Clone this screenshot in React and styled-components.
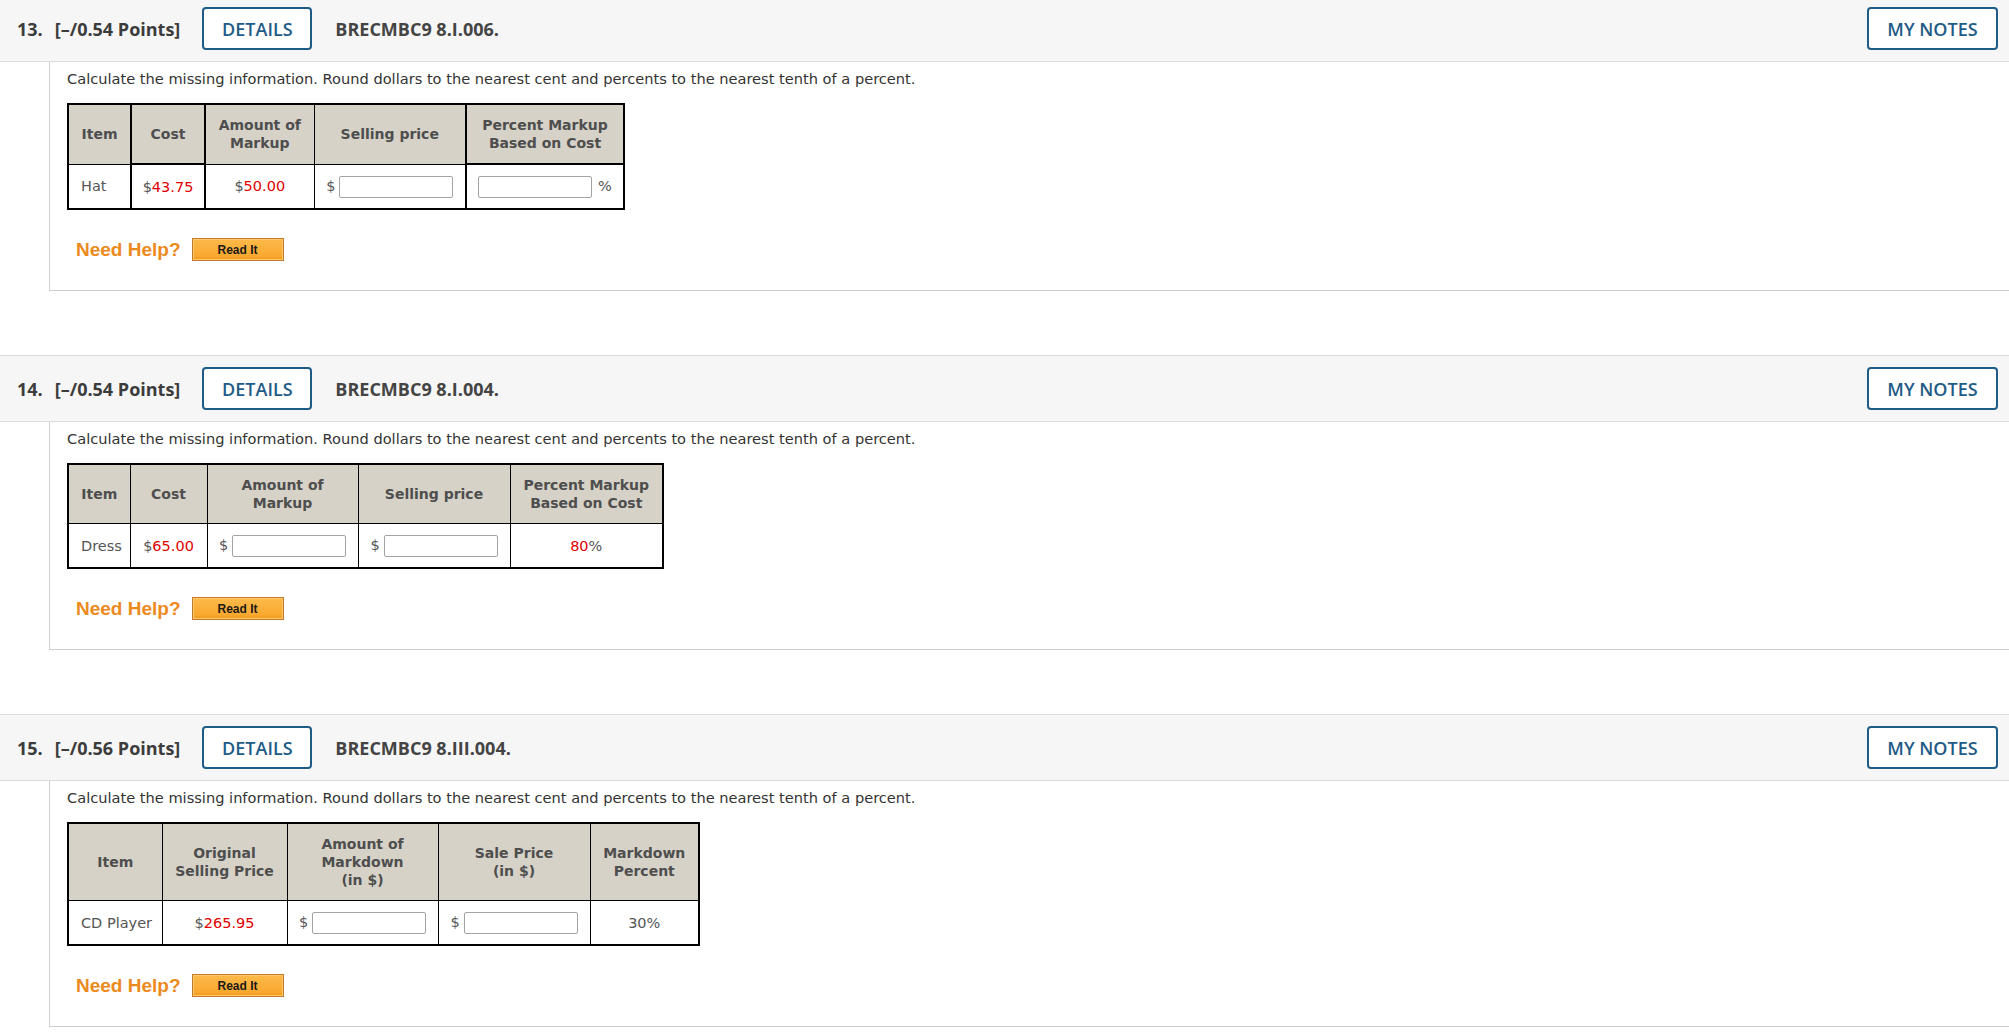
import React from "react";
import styled, { createGlobalStyle } from "styled-components";

const Global = createGlobalStyle`
  html, body { margin: 0; padding: 0; background: #fff; }
  body { font-family: "DejaVu Sans", Verdana, sans-serif; overflow: hidden; }
`;

const Page = styled.div`
  margin-top: -5px;
  display: flex;
  flex-direction: column;
`;

const Question = styled.section`
  display: flex;
  flex-direction: column;
  margin-bottom: 64px;
`;

const Header = styled.header`
  display: flex;
  align-items: center;
  height: 65px;
  background: #f6f6f6;
  border-top: 1px solid #dcdcdc;
  border-bottom: 1px solid #dcdcdc;
  padding: 0 11px 0 17px;
  font-family: "Open Sans", sans-serif;
`;

const Num = styled.span`
  font-size: 18px;
  font-weight: 700;
  color: #3c3c3c;
  margin-right: 12px;
`;

const Points = styled.span`
  font-size: 18px;
  font-weight: 700;
  color: #3c3c3c;
  margin-right: 22px;
`;

const OutlineButton = styled.button`
  box-sizing: border-box;
  height: 43px;
  width: ${(p) => p.$w}px;
  border: 2px solid #1e5c87;
  border-radius: 4px;
  background: #fff;
  color: #1f5b87;
  font-family: "Open Sans", sans-serif;
  font-size: 18px;
  font-weight: 600;
  padding: 0;
  cursor: pointer;
`;

const Code = styled.span`
  margin-left: 23px;
  font-size: 18px;
  font-weight: 700;
  color: #444;
`;

const Spacer = styled.div`
  flex: 1;
`;

const Content = styled.div`
  margin-left: 49px;
  border-left: 1px solid #cfcfcf;
  border-bottom: 1px solid #cfcfcf;
  padding: 8px 0 29px 17px;
  display: flex;
  flex-direction: column;
  align-items: flex-start;
`;

const Prompt = styled.p`
  margin: 0;
  font-size: 14.6px;
  line-height: 18px;
  color: #333;
`;

const Table = styled.table`
  margin-top: 15px;
  border-collapse: collapse;
  border: 2px solid #000;
`;

const Th = styled.th`
  background: #d6d2c8;
  border: ${(p) => (p.$thick ? 2 : 1)}px solid #000;
  padding: 11px 4px;
  font-size: 14px;
  line-height: 18px;
  font-weight: 700;
  color: #4e4e4e;
  text-align: center;
`;

const Td = styled.td`
  border: ${(p) => (p.$thick ? 2 : 1)}px solid #000;
  padding: ${(p) => (p.$left ? "10px 4px 10px 12px" : "10px 4px")};
  font-size: 14.5px;
  line-height: 22px;
  color: #555;
  text-align: ${(p) => (p.$left ? "left" : "center")};
  white-space: nowrap;
  background: #fff;
`;

const Red = styled.span`
  color: #e00000;
`;

const Unit = styled.span`
  color: #555;
`;

const Field = styled.input`
  box-sizing: border-box;
  width: 114px;
  height: 22px;
  border: 1px solid #a3a3a3;
  border-radius: 2px;
  vertical-align: middle;
  margin: ${(p) => (p.$after ? "0 6px 0 0" : "0 0 0 4px")};
  padding: 0;
`;

const HelpRow = styled.div`
  margin-top: 28px;
  margin-left: 9px;
  display: flex;
  align-items: center;
  height: 23px;
`;

const NeedHelp = styled.span`
  font-family: "Liberation Sans", Arial, sans-serif;
  font-weight: 700;
  font-size: 19px;
  color: #ec8a1e;
  margin-right: 11px;
`;

const ReadIt = styled.button`
  box-sizing: border-box;
  width: 92px;
  height: 23px;
  border: 1px solid #c4792a;
  box-shadow: inset 0 0 0 1px #ffc86a, inset 0 -3px 2px rgba(230, 140, 20, 0.35);
  background: linear-gradient(#fcba4a, #f9a52a);
  font-family: "Liberation Sans", Arial, sans-serif;
  font-weight: 700;
  font-size: 12px;
  color: #1a1a1a;
  padding: 0;
`;

const Money = ({ v }) => (
  <>
    <Unit>$</Unit>
    <Red>{v}</Red>
  </>
);

const DollarField = () => (
  <>
    <Unit>$</Unit>
    <Field type="text" />
  </>
);

const QHeader = ({ n, pts, code }) => (
  <Header>
    <Num>{n}.</Num>
    <Points>[–/{pts} Points]</Points>
    <OutlineButton $w={110}>DETAILS</OutlineButton>
    <Code>{code}</Code>
    <Spacer />
    <OutlineButton $w={131}>MY NOTES</OutlineButton>
  </Header>
);

const PROMPT =
  "Calculate the missing information. Round dollars to the nearest cent and percents to the nearest tenth of a percent.";

const Help = () => (
  <HelpRow>
    <NeedHelp>Need Help?</NeedHelp>
    <ReadIt>Read It</ReadIt>
  </HelpRow>
);

const Cols = ({ widths }) => (
  <colgroup>
    {widths.map((w, i) => (
      <col key={i} style={{ width: w }} />
    ))}
  </colgroup>
);

export default function App() {
  return (
    <>
      <Global />
      <Page>
        <Question>
          <QHeader n="13" pts="0.54" code="BRECMBC9 8.I.006." />
          <Content>
            <Prompt>{PROMPT}</Prompt>
            <Table>
              <Cols widths={[63, 74, 109, 152, 158]} />
              <thead>
                <tr>
                  <Th>Item</Th>
                  <Th $thick>Cost</Th>
                  <Th>
                    Amount of
                    <br />
                    Markup
                  </Th>
                  <Th>Selling price</Th>
                  <Th $thick>
                    Percent Markup
                    <br />
                    Based on Cost
                  </Th>
                </tr>
              </thead>
              <tbody>
                <tr>
                  <Td $left>Hat</Td>
                  <Td $thick>
                    <Money v="43.75" />
                  </Td>
                  <Td>
                    <Money v="50.00" />
                  </Td>
                  <Td>
                    <DollarField />
                  </Td>
                  <Td $thick>
                    <Field type="text" $after />
                    <Unit>%</Unit>
                  </Td>
                </tr>
              </tbody>
            </Table>
            <Help />
          </Content>
        </Question>

        <Question>
          <QHeader n="14" pts="0.54" code="BRECMBC9 8.I.004." />
          <Content>
            <Prompt>{PROMPT}</Prompt>
            <Table>
              <Cols widths={[62, 77, 151, 152, 153]} />
              <thead>
                <tr>
                  <Th>Item</Th>
                  <Th>Cost</Th>
                  <Th>
                    Amount of
                    <br />
                    Markup
                  </Th>
                  <Th>Selling price</Th>
                  <Th>
                    Percent Markup
                    <br />
                    Based on Cost
                  </Th>
                </tr>
              </thead>
              <tbody>
                <tr>
                  <Td $left>Dress</Td>
                  <Td>
                    <Money v="65.00" />
                  </Td>
                  <Td>
                    <DollarField />
                  </Td>
                  <Td>
                    <DollarField />
                  </Td>
                  <Td>
                    <Red>80</Red>
                    <Unit>%</Unit>
                  </Td>
                </tr>
              </tbody>
            </Table>
            <Help />
          </Content>
        </Question>

        <Question>
          <QHeader n="15" pts="0.56" code="BRECMBC9 8.III.004." />
          <Content>
            <Prompt>{PROMPT}</Prompt>
            <Table>
              <Cols widths={[94, 125, 151, 152, 109]} />
              <thead>
                <tr>
                  <Th>Item</Th>
                  <Th>
                    Original
                    <br />
                    Selling Price
                  </Th>
                  <Th>
                    Amount of
                    <br />
                    Markdown
                    <br />
                    (in $)
                  </Th>
                  <Th>
                    Sale Price
                    <br />
                    (in $)
                  </Th>
                  <Th>
                    Markdown
                    <br />
                    Percent
                  </Th>
                </tr>
              </thead>
              <tbody>
                <tr>
                  <Td $left>CD Player</Td>
                  <Td>
                    <Money v="265.95" />
                  </Td>
                  <Td>
                    <DollarField />
                  </Td>
                  <Td>
                    <DollarField />
                  </Td>
                  <Td>30%</Td>
                </tr>
              </tbody>
            </Table>
            <Help />
          </Content>
        </Question>
      </Page>
    </>
  );
}
